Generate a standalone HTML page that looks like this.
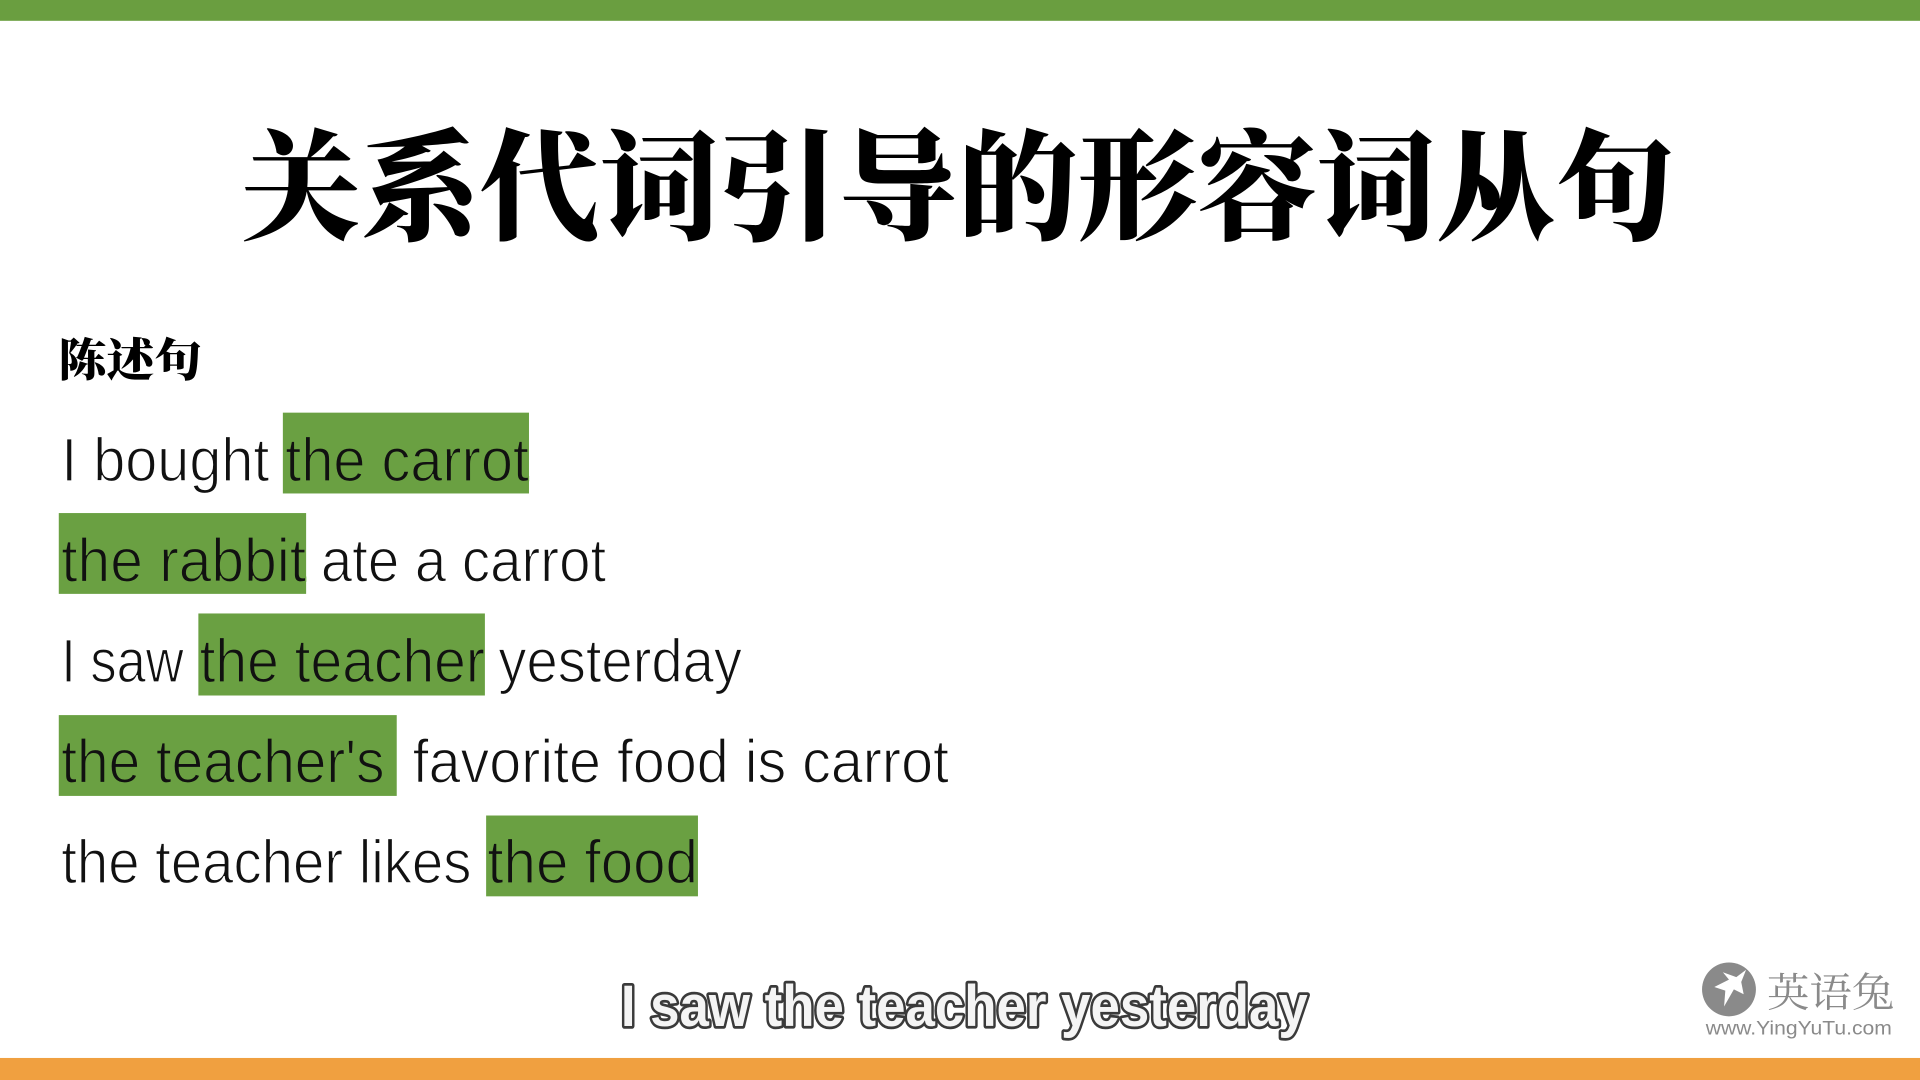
<!DOCTYPE html>
<html><head><meta charset="utf-8"><style>
html,body{margin:0;padding:0;background:#fff;width:1920px;height:1080px;overflow:hidden}
svg{display:block}
</style></head><body>
<svg width="1920" height="1080" viewBox="0 0 1568 882" xmlns="http://www.w3.org/2000/svg">
<rect x="0" y="0" width="1568" height="17" fill="#6a9e40"/>
<rect x="0" y="864" width="1568" height="18" fill="#f0a040"/>
<text x="197" y="188" font-family="'Noto Serif CJK SC',serif" font-weight="900" font-size="98" textLength="1171" lengthAdjust="spacingAndGlyphs" fill="#000">关系代词引导的形容词从句</text>
<text x="48" y="307" font-family="'Noto Serif CJK SC',serif" font-weight="900" font-size="37" textLength="117" lengthAdjust="spacingAndGlyphs" fill="#000">陈述句</text>
<g fill="#6aa042">
<rect x="231" y="337" width="201" height="66"/>
<rect x="48" y="419" width="202" height="66"/>
<rect x="162" y="501" width="234" height="67"/>
<rect x="48" y="584" width="276" height="66"/>
<rect x="397" y="666" width="173" height="66"/>
</g>
<g font-family="'Liberation Sans',sans-serif" font-size="50" fill="#111" stroke-width="1.1">
<g stroke="#fff">
<text x="50" y="393" textLength="170" lengthAdjust="spacingAndGlyphs">I bought</text>
<text x="262" y="475" textLength="233" lengthAdjust="spacingAndGlyphs">ate a carrot</text>
<text x="50" y="557" textLength="100" lengthAdjust="spacingAndGlyphs">I saw</text>
<text x="407" y="557" textLength="199" lengthAdjust="spacingAndGlyphs">yesterday</text>
<text x="337" y="639" textLength="438" lengthAdjust="spacingAndGlyphs">favorite food is carrot</text>
<text x="50" y="721" textLength="335" lengthAdjust="spacingAndGlyphs">the teacher likes</text>
</g>
<g stroke="#6aa042">
<text x="233" y="393" textLength="199" lengthAdjust="spacingAndGlyphs">the carrot</text>
<text x="50" y="475" textLength="200" lengthAdjust="spacingAndGlyphs">the rabbit</text>
<text x="163" y="557" textLength="233" lengthAdjust="spacingAndGlyphs">the teacher</text>
<text x="50" y="639" textLength="264" lengthAdjust="spacingAndGlyphs">the teacher's</text>
<text x="398" y="721" textLength="172" lengthAdjust="spacingAndGlyphs">the food</text>
</g>
</g>
<text x="507" y="838" font-family="'Liberation Sans',sans-serif" font-weight="bold" font-size="48" textLength="561" lengthAdjust="spacingAndGlyphs" fill="#f4f4f4" stroke="#3a3a3a" stroke-width="4.5" paint-order="stroke" stroke-linejoin="round">I saw the teacher yesterday</text>
<circle cx="1412" cy="808" r="22" fill="#8a8a8a"/>
<path d="M1400 806 L1412 800 L1407 794 L1418 798 L1426 792 L1422 802 L1424 812 L1416 808 L1408 822 L1409 809 Z" fill="#fff"/>
<text x="1443" y="822" font-family="'Noto Serif CJK SC',serif" font-size="33" textLength="104" lengthAdjust="spacingAndGlyphs" fill="#8a8a8a">英语兔</text>
<text x="1393" y="845" font-family="'Liberation Sans',sans-serif" font-size="16" textLength="152" lengthAdjust="spacingAndGlyphs" fill="#8a8a8a">www.YingYuTu.com</text>
</svg>
</body></html>
